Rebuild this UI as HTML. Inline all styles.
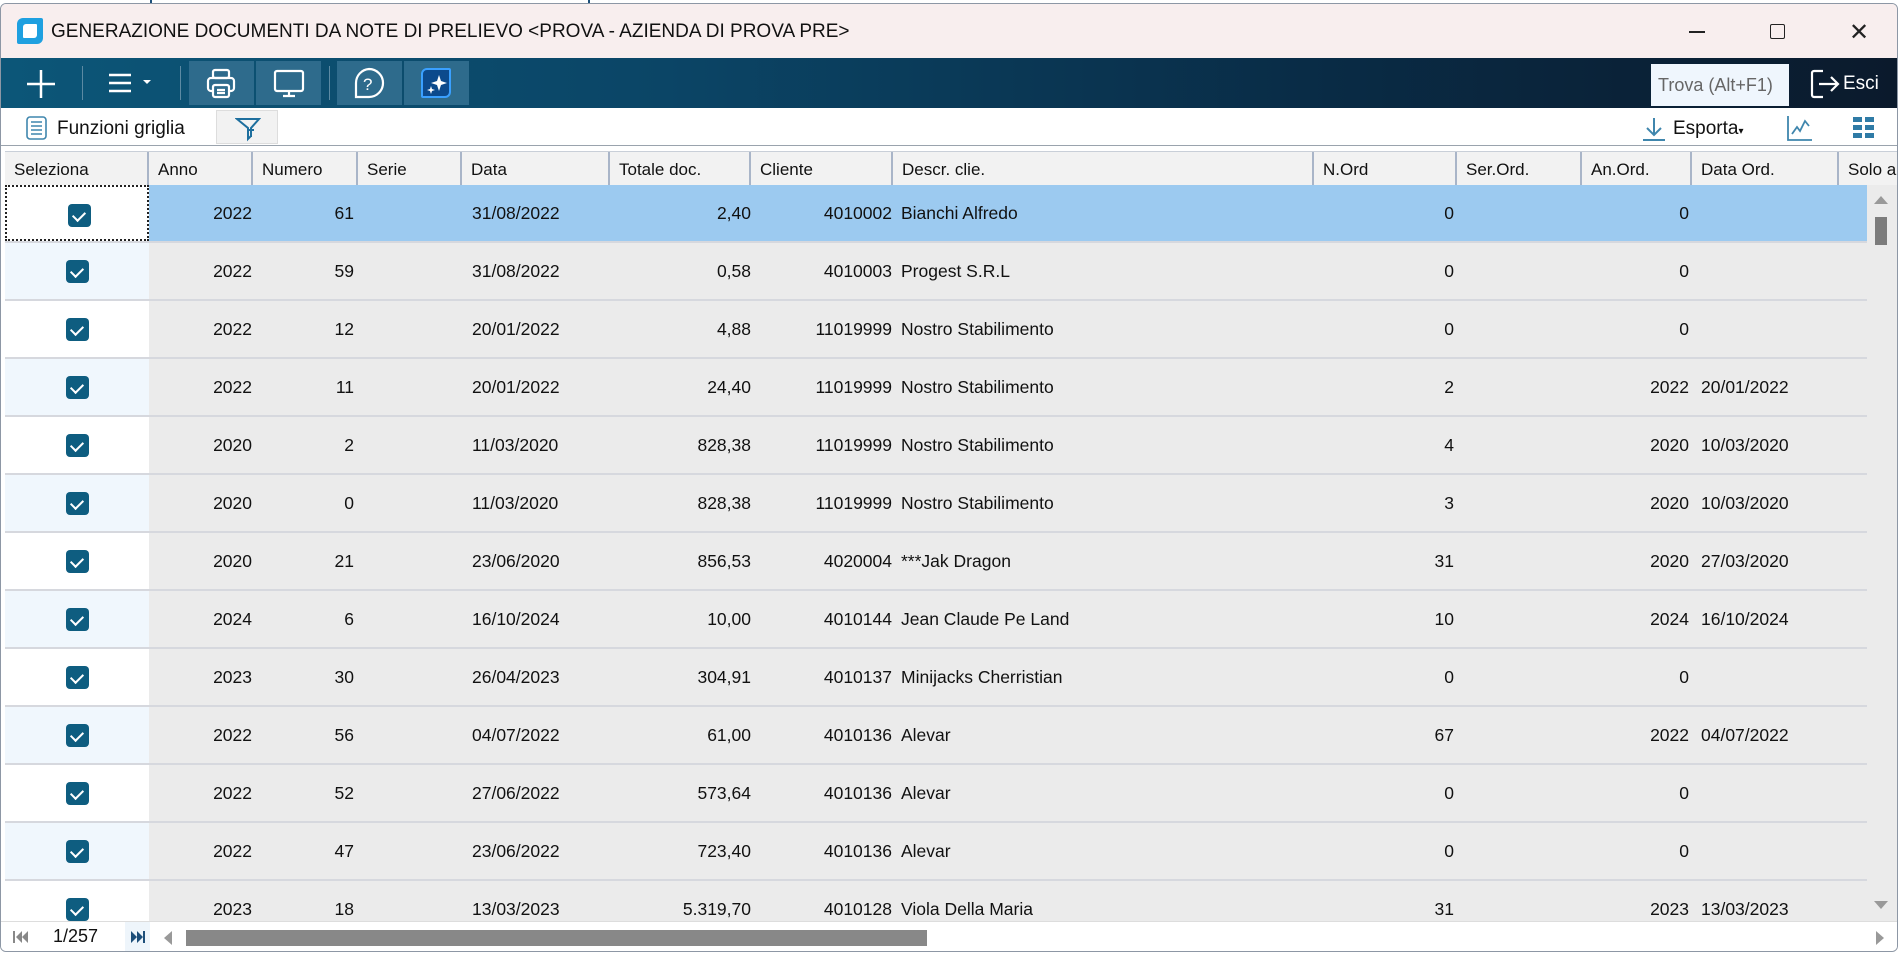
<!DOCTYPE html>
<html><head><meta charset="utf-8"><style>
*{margin:0;padding:0;box-sizing:border-box}
body{width:1898px;height:955px;overflow:hidden;background:#fff;font-family:"Liberation Sans","DejaVu Sans",sans-serif;position:relative}
.a{position:absolute}
#win{left:0;top:3px;width:1898px;height:949px;border:1px solid #8d97a5;border-radius:6px;overflow:hidden;background:#fff}
#title{left:0;top:0;width:1898px;height:54px;background:#f8eeee}
#tb{left:0;top:54px;width:1898px;height:50px;background:linear-gradient(90deg,#0c5678 0%,#0b4566 35%,#092b45 70%,#0b1a2c 100%)}
.btn{top:3px;height:44px;background:#2e6b8c}
.div{top:8px;width:1px;height:34px;background:#5c8aa3}
#gtb{left:0;top:104px;width:1898px;height:38px;background:#fff;border-bottom:1px solid #9aa3ad}
#hdr{left:4px;top:147px;width:1894px;height:36px;background:#f2f2f2;border-bottom:1px solid #a8b4c8;border-top:1px solid #c9cfd8}
.h{position:absolute;top:0;height:35px;border-right:2px solid #a9b5c8;font-size:17px;line-height:36px;padding-left:9px;color:#111;white-space:nowrap;overflow:hidden}
#body{left:4px;top:181px;width:1862px;height:736px;overflow:hidden;background:#ebebeb}
.r{position:absolute;left:0;width:1862px;height:58px;background:#ebebeb;border-bottom:2px solid #d6d8de;font-size:17.5px;color:#111}
.r span{position:absolute;top:0;line-height:56px;white-space:nowrap}
.s{left:0;width:144px;height:56px;background:#fff}
.r:nth-child(even) .s{background:#f0f7fd}
.cb{position:absolute;left:61px;top:17px;width:23px;height:23px;background:#0e5d80;border-radius:4px}
.cb:after{content:"";position:absolute;left:7px;top:5px;width:6px;height:10px;border:solid #fff;border-width:0 2px 2px 0;transform:rotate(45deg)}
.c1{right:1615px}.c2{right:1513px}.c3{left:467px}.c4{right:1116px}.c5{right:975px}.c6{left:896px}.c7{right:413px}.c8{right:178px}.c9{left:1696px}
.sel{background:#9ccaf0}
.sel .s{background:#fff;border:2px dotted #222}
</style></head><body>
<div class="a" style="left:150px;top:0;width:2px;height:4px;background:#1d4f7a"></div>
<div class="a" style="left:588px;top:0;width:2px;height:4px;background:#1d4f7a"></div>
<div id="win" class="a">
<div id="title" class="a">
 <div class="a" style="left:16px;top:14px;width:26px;height:26px;background:#1ea0e0;border-radius:6px 2px 6px 2px"><div class="a" style="left:6px;top:6px;width:14px;height:14px;background:#fff;border-radius:3px 1px 3px 1px"></div></div>
 <div class="a" style="left:50px;top:17px;font-size:19px;color:#111;white-space:nowrap">GENERAZIONE DOCUMENTI DA NOTE DI PRELIEVO &lt;PROVA - AZIENDA DI PROVA PRE&gt;</div>
 <div class="a" style="left:1688px;top:27px;width:16px;height:1.5px;background:#222"></div>
 <div class="a" style="left:1769px;top:20px;width:15px;height:15px;border:1.5px solid #222;border-radius:2px"></div>
 <div class="a" style="left:1848px;top:14px;font-size:24px;color:#222">✕</div>
</div>
<div id="tb" class="a">
 <svg class="a" style="left:24px;top:10px" width="32" height="32"><path d="M16 2v28M2 16h28" stroke="#fff" stroke-width="2.5"/></svg>
 <div class="a div" style="left:81px"></div>
 <svg class="a" style="left:108px;top:12px" width="46" height="26"><path d="M0 5h22M0 13h22M0 21h22" stroke="#fff" stroke-width="2.5"/><path d="M34 10l4 4 4-4z" fill="#fff"/></svg>
 <div class="a div" style="left:179px"></div>
 <div class="a btn" style="left:188px;width:65px"></div>
 <svg class="a" style="left:204px;top:10px" width="32" height="32" fill="none" stroke="#fff" stroke-width="2.2"><rect x="8" y="2" width="16" height="8" rx="2"/><rect x="3" y="10" width="26" height="13" rx="3"/><rect x="8" y="17" width="16" height="12" rx="2" fill="#2e6b8c"/><path d="M12 22h8M12 25h8"/></svg>
 <div class="a btn" style="left:255px;width:65px"></div>
 <svg class="a" style="left:272px;top:11px" width="32" height="30" fill="none" stroke="#fff" stroke-width="2.2"><rect x="2" y="2" width="28" height="20" rx="2"/><path d="M16 22v5M10 27h12"/></svg>
 <div class="a div" style="left:328px"></div>
 <div class="a btn" style="left:336px;width:65px"></div>
 <svg class="a" style="left:351px;top:9px" width="34" height="34" fill="none" stroke="#fff" stroke-width="2.2"><path d="M17 2a14 14 0 1 1 0 28H4V16A14 14 0 0 1 17 2z"/><text x="11" y="23" font-size="17" fill="#fff" stroke="none" font-family="Liberation Sans">?</text></svg>
 <div class="a btn" style="left:403px;width:65px"></div>
 <div class="a" style="left:420px;top:10px;width:30px;height:30px;background:#0c4a8c;border:2px solid #3aa0ff;border-radius:6px 2px 6px 2px"></div>
 <svg class="a" style="left:424px;top:14px" width="24" height="24"><path d="M14 3l2 6 6 2-6 2-2 6-2-6-6-2 6-2z" fill="#fff"/><path d="M6 14l1 3 3 1-3 1-1 3-1-3-3-1 3-1z" fill="#fff"/></svg>
 <div class="a" style="left:1650px;top:6px;width:138px;height:42px;background:#eff6fd;font-size:18px;color:#666;line-height:42px;padding-left:7px">Trova (Alt+F1)</div>
 <svg class="a" style="left:1808px;top:10px" width="32" height="32" fill="none" stroke="#fff" stroke-width="2.2"><path d="M14 3H5a2 2 0 0 0-2 2v22a2 2 0 0 0 2 2h9"/><path d="M10 16h19M22 9l7 7-7 7"/></svg>
 <div class="a" style="left:1842px;top:15px;font-size:19px;color:#fff">Esci</div>
</div>
<div id="gtb" class="a">
 <svg class="a" style="left:24px;top:8px" width="24" height="24" fill="none" stroke="#3f86ad" stroke-width="1.6"><rect x="2" y="1" width="19" height="22" rx="3"/><path d="M6 6h11M6 10h11M6 14h11M6 18h11"/></svg>
 <div class="a" style="left:56px;top:10px;font-size:19px;color:#111">Funzioni griglia</div>
 <div class="a" style="left:215px;top:2px;width:62px;height:34px;background:#f2f2f2;border:1px solid #ddd"></div>
 <svg class="a" style="left:234px;top:8px" width="26" height="26" fill="none" stroke="#1e6f9e" stroke-width="2"><path d="M2 3h22l-8 9v8l-3 3v-11z"/><path d="M13 14h6M16 14v7"/></svg>
 <svg class="a" style="left:1640px;top:8px" width="26" height="26" fill="none" stroke="#3f86ad" stroke-width="2"><path d="M13 2v17M6 12l7 7 7-7M2 24h22"/></svg>
 <div class="a" style="left:1672px;top:10px;font-size:19px;color:#111">Esporta<span style="font-size:10px">▾</span></div>
 <svg class="a" style="left:1785px;top:6px" width="28" height="28" fill="none" stroke="#3f86ad" stroke-width="1.8"><path d="M2 2v24h24"/><path d="M6 20l5-7 3 4 5-10 4 5"/></svg>
 <svg class="a" style="left:1852px;top:9px" width="22" height="22" fill="#2f7ba6"><rect x="0" y="0" width="9" height="5"/><rect x="12" y="0" width="9" height="5"/><rect x="0" y="8" width="9" height="5"/><rect x="12" y="8" width="9" height="5"/><rect x="0" y="16" width="9" height="5"/><rect x="12" y="16" width="9" height="5"/></svg>
</div>
<div id="hdr" class="a">
 <div class="h" style="left:0;width:144px">Seleziona</div>
 <div class="h" style="left:144px;width:104px">Anno</div>
 <div class="h" style="left:248px;width:105px">Numero</div>
 <div class="h" style="left:353px;width:104px">Serie</div>
 <div class="h" style="left:457px;width:148px">Data</div>
 <div class="h" style="left:605px;width:141px">Totale doc.</div>
 <div class="h" style="left:746px;width:142px">Cliente</div>
 <div class="h" style="left:888px;width:421px">Descr. clie.</div>
 <div class="h" style="left:1309px;width:143px">N.Ord</div>
 <div class="h" style="left:1452px;width:125px">Ser.Ord.</div>
 <div class="h" style="left:1577px;width:110px">An.Ord.</div>
 <div class="h" style="left:1687px;width:147px">Data Ord.</div>
 <div class="h" style="left:1834px;width:60px;border:none">Solo a</div>
</div>
<div id="body" class="a">
<div class="r sel" style="top:0"><div class="a s"><div class="cb"></div></div><span class="c1">2022</span><span class="c2">61</span><span class="c3">31/08/2022</span><span class="c4">2,40</span><span class="c5">4010002</span><span class="c6">Bianchi Alfredo</span><span class="c7">0</span><span class="c8">0</span></div>
<div class="r" style="top:58px"><div class="a s"><div class="cb"></div></div><span class="c1">2022</span><span class="c2">59</span><span class="c3">31/08/2022</span><span class="c4">0,58</span><span class="c5">4010003</span><span class="c6">Progest S.R.L</span><span class="c7">0</span><span class="c8">0</span></div>
<div class="r" style="top:116px"><div class="a s"><div class="cb"></div></div><span class="c1">2022</span><span class="c2">12</span><span class="c3">20/01/2022</span><span class="c4">4,88</span><span class="c5">11019999</span><span class="c6">Nostro Stabilimento</span><span class="c7">0</span><span class="c8">0</span></div>
<div class="r" style="top:174px"><div class="a s"><div class="cb"></div></div><span class="c1">2022</span><span class="c2">11</span><span class="c3">20/01/2022</span><span class="c4">24,40</span><span class="c5">11019999</span><span class="c6">Nostro Stabilimento</span><span class="c7">2</span><span class="c8">2022</span><span class="c9">20/01/2022</span></div>
<div class="r" style="top:232px"><div class="a s"><div class="cb"></div></div><span class="c1">2020</span><span class="c2">2</span><span class="c3">11/03/2020</span><span class="c4">828,38</span><span class="c5">11019999</span><span class="c6">Nostro Stabilimento</span><span class="c7">4</span><span class="c8">2020</span><span class="c9">10/03/2020</span></div>
<div class="r" style="top:290px"><div class="a s"><div class="cb"></div></div><span class="c1">2020</span><span class="c2">0</span><span class="c3">11/03/2020</span><span class="c4">828,38</span><span class="c5">11019999</span><span class="c6">Nostro Stabilimento</span><span class="c7">3</span><span class="c8">2020</span><span class="c9">10/03/2020</span></div>
<div class="r" style="top:348px"><div class="a s"><div class="cb"></div></div><span class="c1">2020</span><span class="c2">21</span><span class="c3">23/06/2020</span><span class="c4">856,53</span><span class="c5">4020004</span><span class="c6">***Jak Dragon</span><span class="c7">31</span><span class="c8">2020</span><span class="c9">27/03/2020</span></div>
<div class="r" style="top:406px"><div class="a s"><div class="cb"></div></div><span class="c1">2024</span><span class="c2">6</span><span class="c3">16/10/2024</span><span class="c4">10,00</span><span class="c5">4010144</span><span class="c6">Jean Claude Pe Land</span><span class="c7">10</span><span class="c8">2024</span><span class="c9">16/10/2024</span></div>
<div class="r" style="top:464px"><div class="a s"><div class="cb"></div></div><span class="c1">2023</span><span class="c2">30</span><span class="c3">26/04/2023</span><span class="c4">304,91</span><span class="c5">4010137</span><span class="c6">Minijacks Cherristian</span><span class="c7">0</span><span class="c8">0</span></div>
<div class="r" style="top:522px"><div class="a s"><div class="cb"></div></div><span class="c1">2022</span><span class="c2">56</span><span class="c3">04/07/2022</span><span class="c4">61,00</span><span class="c5">4010136</span><span class="c6">Alevar</span><span class="c7">67</span><span class="c8">2022</span><span class="c9">04/07/2022</span></div>
<div class="r" style="top:580px"><div class="a s"><div class="cb"></div></div><span class="c1">2022</span><span class="c2">52</span><span class="c3">27/06/2022</span><span class="c4">573,64</span><span class="c5">4010136</span><span class="c6">Alevar</span><span class="c7">0</span><span class="c8">0</span></div>
<div class="r" style="top:638px"><div class="a s"><div class="cb"></div></div><span class="c1">2022</span><span class="c2">47</span><span class="c3">23/06/2022</span><span class="c4">723,40</span><span class="c5">4010136</span><span class="c6">Alevar</span><span class="c7">0</span><span class="c8">0</span></div>
<div class="r" style="top:696px"><div class="a s"><div class="cb"></div></div><span class="c1">2023</span><span class="c2">18</span><span class="c3">13/03/2023</span><span class="c4">5.319,70</span><span class="c5">4010128</span><span class="c6">Viola Della Maria</span><span class="c7">31</span><span class="c8">2023</span><span class="c9">13/03/2023</span></div>
</div>
<div class="a" style="left:1866px;top:181px;width:30px;height:736px;background:#ebebeb"></div>
<svg class="a" style="left:1872px;top:191px" width="16" height="10"><path d="M1 9L8 1l7 8z" fill="#999"/></svg>
<div class="a" style="left:1874px;top:213px;width:12px;height:28px;background:#7c7c7c"></div>
<svg class="a" style="left:1872px;top:896px" width="16" height="10"><path d="M1 1l7 8 7-8z" fill="#999"/></svg>
<div class="a" style="left:0;top:917px;width:1898px;height:32px;background:#fff;border-top:1px solid #ddd"></div>
<svg class="a" style="left:12px;top:926px" width="16" height="14" fill="#888"><rect x="0" y="1" width="2" height="12"/><path d="M9 1L3 7l6 6zM15 1L9 7l6 6z"/></svg>
<div class="a" style="left:52px;top:922px;font-size:18px;color:#111">1/257</div>
<div class="a" style="left:124px;top:918px;width:25px;height:30px;background:#eef5fb"></div>
<svg class="a" style="left:129px;top:926px" width="16" height="14" fill="#1d4f7a"><path d="M1 1l6 6-6 6zM7 1l6 6-6 6z"/><rect x="13" y="1" width="2" height="12"/></svg>
<svg class="a" style="left:162px;top:926px" width="10" height="16"><path d="M9 1L1 8l8 7z" fill="#999"/></svg>
<div class="a" style="left:185px;top:926px;width:741px;height:16px;background:#888"></div>
<svg class="a" style="left:1874px;top:926px" width="10" height="16"><path d="M1 1l8 7-8 7z" fill="#999"/></svg>
</div>
</body></html>
